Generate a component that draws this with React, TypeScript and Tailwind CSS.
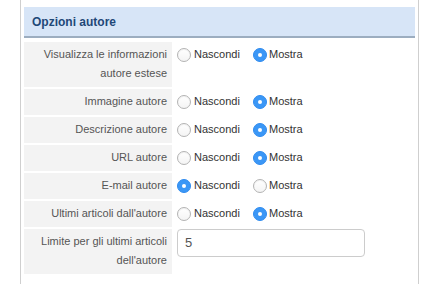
import React from "react";

type Row = {
  label: string[];
  kind: "radio" | "input";
  value?: "hide" | "show";
  text?: string;
};

const rows: Row[] = [
  { label: ["Visualizza le informazioni", "autore estese"], kind: "radio", value: "show" },
  { label: ["Immagine autore"], kind: "radio", value: "show" },
  { label: ["Descrizione autore"], kind: "radio", value: "show" },
  { label: ["URL autore"], kind: "radio", value: "show" },
  { label: ["E-mail autore"], kind: "radio", value: "hide" },
  { label: ["Ultimi articoli dall'autore"], kind: "radio", value: "show" },
  { label: ["Limite per gli ultimi articoli", "dell'autore"], kind: "input", text: "5" },
];

function Radio({ checked }: { checked: boolean }) {
  if (checked) {
    return (
      <span className="w-[14px] h-[14px] rounded-full bg-[#3b97f6] border border-[#2f8bef] flex items-center justify-center shrink-0">
        <span className="w-[4px] h-[4px] rounded-full bg-white" />
      </span>
    );
  }
  return (
    <span className="w-[14px] h-[14px] rounded-full border border-[#b3b3b3] bg-gradient-to-b from-white to-[#f4f4f4] shadow-[inset_0_1px_1px_rgba(0,0,0,0.06)] shrink-0" />
  );
}

export default function App() {
  return (
    <div className="w-[431px] h-[284px] bg-white overflow-hidden font-['Liberation_Sans',Arial,sans-serif]">
      <div className="ml-[20px] w-[399px] h-full border-x border-[#cfcfcf] pt-[7px] px-[3px]">
        {/* Header */}
        <div className="h-[31px] bg-[#d7e5f7] border-b-2 border-[#9cadc0] flex items-center pl-[8px]">
          <span className="text-[12px] font-bold text-[#1f4877]">Opzioni autore</span>
        </div>

        {/* Options table */}
        <div className="mt-[4px] grid grid-cols-[148px_1fr] gap-y-[2px]">
          {rows.map((r, i) => (
            <React.Fragment key={i}>
              <div className="bg-[#f3f3f3] pt-[3px] pb-[4px] pr-[5px] text-right text-[11px] leading-[19px] text-[#555]">
                {r.label.map((l, j) => (
                  <div key={j}>{l}</div>
                ))}
              </div>
              {r.kind === "radio" ? (
                <div className="pt-[3px] pl-[5px] flex items-start text-[11px] text-[#333]">
                  <div className="w-[76px] h-[19px] flex items-center gap-[3px]">
                    <Radio checked={r.value === "hide"} />
                    <span>Nascondi</span>
                  </div>
                  <div className="h-[19px] flex items-center gap-[2px]">
                    <Radio checked={r.value === "show"} />
                    <span>Mostra</span>
                  </div>
                </div>
              ) : (
                <div className="pl-[5px]">
                  <div className="w-[188px] h-[28px] border border-[#cccccc] rounded-[4px] flex items-center pl-[7px] text-[13px] text-[#555]">
                    {r.text}
                  </div>
                </div>
              )}
            </React.Fragment>
          ))}
        </div>
      </div>
    </div>
  );
}
